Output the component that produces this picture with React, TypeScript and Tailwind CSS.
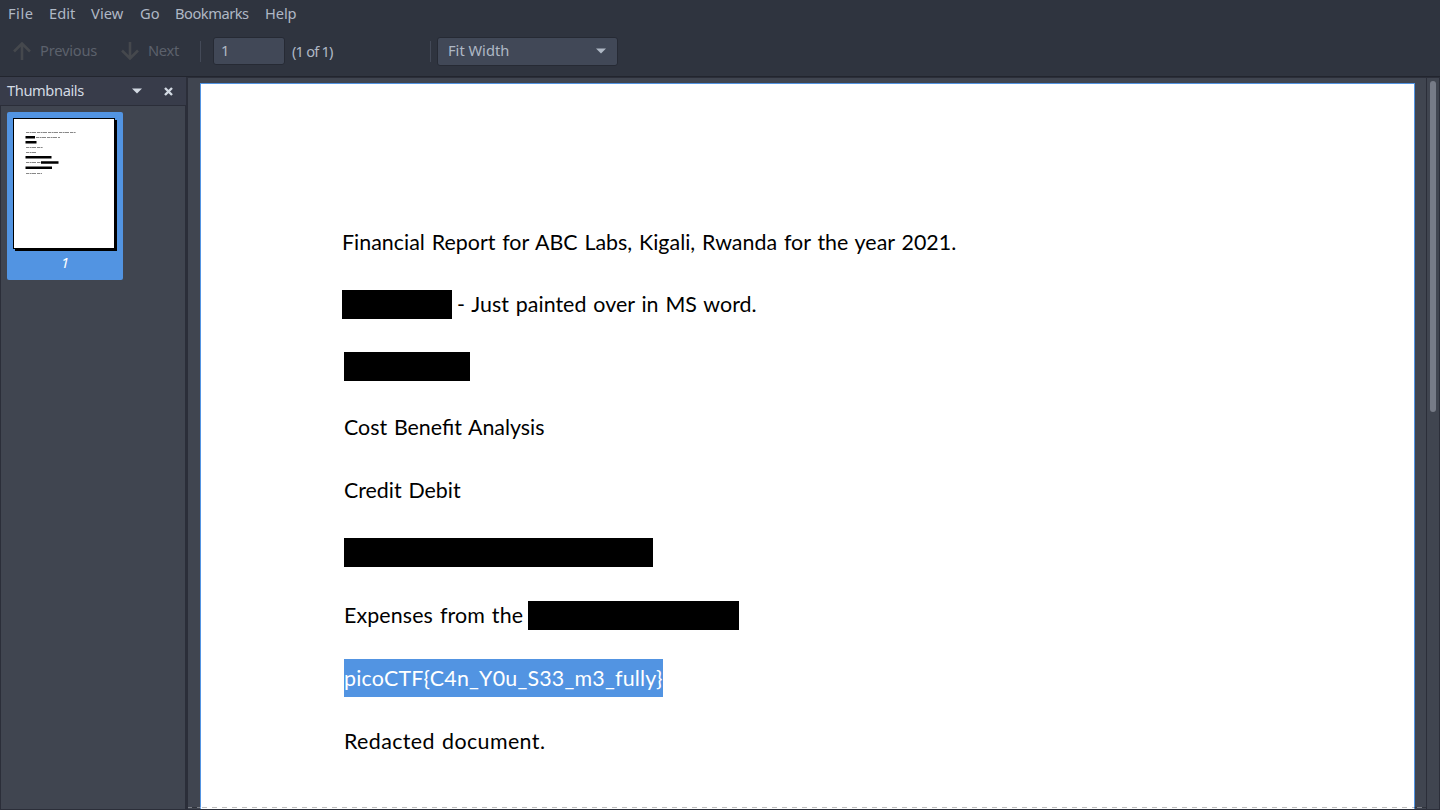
import React from "react";

const menus = [
  { label: "File", box: "w-[41px] tracking-[0.5px]" },
  { label: "Edit", box: "w-[42px]" },
  { label: "View", box: "w-[49px] tracking-[0.1px]" },
  { label: "Go", box: "w-[35px]" },
  { label: "Bookmarks", box: "w-[90px] tracking-[-0.48px]" },
  { label: "Help", box: "w-[47px] tracking-[-0.1px]" },
];

function Caret() {
  return (
    <svg width="10" height="6" viewBox="0 0 10 6" className="block">
      <path d="M0 0.5h10L5 5.5z" fill="currentColor" />
    </svg>
  );
}

function Arrow({ down = false }: { down?: boolean }) {
  return (
    <svg width="18" height="18" viewBox="0 0 18 18" fill="none" stroke="#45484d" strokeWidth="2.6" className={down ? "rotate-180" : ""}>
      <path d="M9 18V2M1 9.5L9 1.5L17 9.5" />
    </svg>
  );
}

function Toolbar() {
  return (
    <div className="flex h-[48px] items-center text-[#5c616c]">
      <div className="flex w-[108px] items-center pl-[13px]">
        <Arrow />
        <span className="ml-[9px] pb-[2px] tracking-[-0.2px]">Previous</span>
      </div>
      <div className="flex w-[92px] items-center pl-[13px]">
        <Arrow down />
        <span className="ml-[9px] pb-[2px] tracking-[-0.3px]">Next</span>
      </div>
      <div className="h-[21px] w-px bg-[#444a58]" />
      <div className="ml-[12px] flex h-[28px] w-[72px] items-center rounded-[3px] border border-[#262a34] bg-[#414857] pb-[2px] pl-[7px] text-[#afb8c5]">1</div>
      <div className="ml-[7px] w-[138px] tracking-[-0.8px] text-[#afb8c5]">(1 of 1)</div>
      <div className="h-[21px] w-px bg-[#444a58]" />
      <div className="ml-[6px] flex h-[29px] w-[181px] items-center justify-between rounded-[3px] border border-[#262a34] bg-[#414857] pr-[11px] pl-[10px] text-[#afb8c5]">
        <span className="pb-[2px]">Fit Width</span>
        <Caret />
      </div>
    </div>
  );
}

function Thumbnail() {
  return (
    <div className="ml-[6px] mt-[6px] h-[168px] w-[116px] rounded-[2px] bg-[#5294e2] pt-[6px] pl-[6px]">
      <svg width="104" height="133" viewBox="0 0 104 133" className="block">
        <rect x="2" y="2" width="102" height="131" fill="#000" />
        <rect x="0" y="0" width="102" height="131" fill="#000" />
        <rect x="1" y="1" width="100" height="129" fill="#fff" />
        <g stroke="#888" strokeWidth="1" strokeDasharray="3 .6 2 .4 4 1">
          <path d="M13 14.5h50M23 19.5h24M13 29.5h17M13 34.5h10M13 44.5h15M13 55.5h16" />
        </g>
        <path d="M12.5 18h9.5v2.5h-9.5zM12.5 23h11v2.5h-11zM12.5 38h26v2.5h-26zM28 43.3h17.5v2.4h-17.5zM12.5 48.6h26.5v2.4h-26.5z" fill="#000" />
      </svg>
      <div className="mt-[1px] w-[104px] text-center italic text-white">1</div>
    </div>
  );
}

function Sidebar() {
  return (
    <aside className="flex w-[188px] shrink-0 flex-col border-r-2 border-[#2b2e39] bg-[#404550]">
      <div className="flex h-[28px] items-center bg-[#383c4a] pl-[7px] text-[#d3dae3]">
        <span className="w-[125px] pb-[2px] tracking-[-0.4px]">Thumbnails</span>
        <Caret />
        <svg width="9" height="9" viewBox="0 0 9 9" className="ml-[22px]" stroke="currentColor" strokeWidth="2.4">
          <path d="M1 1l7 7M8 1L1 8" />
        </svg>
      </div>
      <div className="w-[186px] flex-1 border border-b-0 border-[#2b2e39]">
        <Thumbnail />
      </div>
    </aside>
  );
}

function Page() {
  return (
    <article className="ml-[12px] mt-[5px] w-[1215px] shrink-0 border border-b-0 border-[#5294e2] bg-white pl-[143px] pt-[141px] font-[Lato,sans-serif] text-[21.4px] [word-spacing:1.3px] whitespace-pre text-black">
      <p className="-ml-[2px] flex h-[34px] items-center tracking-[0.02px]">Financial Report for ABC Labs, Kigali, Rwanda for the year 2021.</p>
      <p className="-ml-[2px] mt-[28px] flex h-[34px] items-center"><span className="mr-[5px] h-[29px] w-[110px] bg-black" /><span className="tracking-[0.04px]">- Just painted over in MS word.</span></p>
      <p className="mt-[28px] flex h-[34px] items-center"><span className="h-[29px] w-[126px] bg-black" /></p>
      <p className="mt-[27px] flex h-[34px] items-center">Cost Benefit Analysis</p>
      <p className="mt-[29px] flex h-[34px] items-center">Credit Debit</p>
      <p className="mt-[28px] flex h-[34px] items-center"><span className="h-[29px] w-[309px] bg-black" /></p>
      <p className="mt-[29px] flex h-[34px] items-center"><span className="w-[184px] tracking-[0.12px]">Expenses from the</span><span className="h-[29px] w-[211px] bg-black" /></p>
      <p className="mt-[27px] flex h-[38px] items-center"><span className="h-[38px] w-[319px] bg-[#5294e2] leading-[38px] tracking-[0.21px] text-white">{"picoCTF{C4n_Y0u_S33_m3_fully}"}</span></p>
      <p className="mt-[27px] flex h-[34px] items-center tracking-[0.4px]">Redacted document.</p>
    </article>
  );
}

export default function App() {
  return (
    <div className="flex h-[810px] w-[1440px] flex-col overflow-hidden bg-[#2f343f] font-['Noto_Sans',sans-serif] text-[14.67px] leading-[20px]">
      <header className="h-[77px] shrink-0 border-b border-[#22252e]">
        <nav className="flex h-[27px] items-center pb-[2px] pl-[8px] text-[#afb8c5]">
          {menus.map((m) => <span key={m.label} className={m.box}>{m.label}</span>)}
        </nav>
        <Toolbar />
      </header>
      <div className="flex min-h-0 flex-1 border-b border-[#2b2e39]">
        <Sidebar />
        <main className="relative flex min-w-0 flex-1 border-t border-[#2b2e39] bg-[#404550]">
          <Page />
          <div className="ml-[11px] w-[14px] border-x border-[#2b2e39] pt-[3px] pl-[3px]">
            <div className="h-[331px] w-[6px] rounded-full bg-[#767b87]" />
          </div>
          <div className="absolute bottom-[1px] left-0 h-px w-[1238px] bg-[repeating-linear-gradient(90deg,rgba(255,255,255,0.3)_0_4px,rgba(0,0,0,0.25)_4px_9px,rgba(255,255,255,0.3)_9px_10px)]" />
        </main>
      </div>
    </div>
  );
}
